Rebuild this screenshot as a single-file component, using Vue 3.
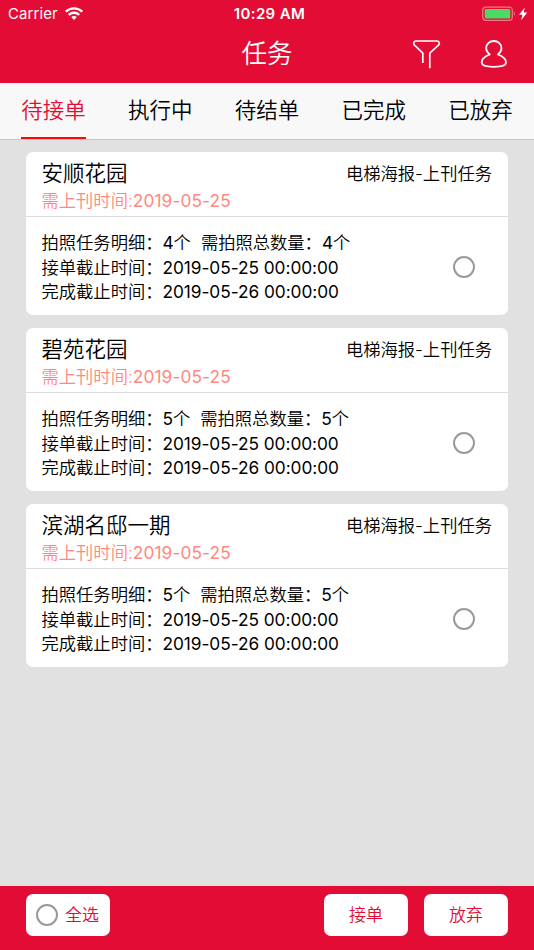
<script setup>
import { ref } from 'vue'

const tabs = ['待接单', '执行中', '待结单', '已完成', '已放弃']
const active = ref(0)
const checked = ref([])

const tasks = [
	{ id: 1, name: '安顺花园', count: 4 },
	{ id: 2, name: '碧苑花园', count: 5 },
	{ id: 3, name: '滨湖名邸一期', count: 5 }
]

const toggle = (id) => {
	checked.value = checked.value.includes(id)
		? checked.value.filter((item) => item !== id)
		: [...checked.value, id]
}

const toggleAll = () => {
	checked.value = checked.value.length === tasks.length ? [] : tasks.map((task) => task.id)
}
</script>

<template>
	<div class="page">
		<header class="header">
			<div class="status-bar">
				<div class="carrier">
					<span class="carrier-name">Carrier</span>
					<svg class="wifi" width="18" height="13" viewBox="0 0 18 13" fill="none" stroke="#fff" stroke-width="2.4">
						<path d="M0.8 4.7C5.4 0.2 12.6 0.2 17.2 4.7" />
						<path d="M3.8 7.8C6.8 5 11.2 5 14.2 7.8" />
						<path d="M6.2 10.1C7.8 8.6 10.2 8.6 11.8 10.1L9 13Z" fill="#fff" stroke="none" />
					</svg>
				</div>
				<span class="clock">10:29 AM</span>
				<svg class="battery" width="46" height="16" viewBox="0 0 46 16">
					<rect x="0.7" y="1.2" width="29.6" height="13.2" rx="3.4" fill="none" stroke="#f0788f" stroke-width="1.2" />
					<rect x="2.7" y="3.1" width="25.6" height="9.4" rx="1.5" fill="#4cd964" />
					<path d="M31.9 5.6Q34 7.8 31.9 10Z" fill="#f0788f" />
					<path d="M42.8 1.4L37 8.8H40.4L39.2 14.2L45.2 6.6H41.6Z" fill="#fff" />
				</svg>
			</div>
			<div class="nav-bar">
				<h1>任务</h1>
				<div class="nav-icons">
					<svg width="28" height="30" viewBox="0 0 28 30" fill="none" stroke="#fff" stroke-width="1.7" stroke-linecap="round" stroke-linejoin="round">
						<path d="M9.8 23.2V14.2L1.5 6.2C0 4.6 0.7 2 3 2H24C26.3 2 27 4.6 25.5 6.2L16.8 14.2V28.4" />
					</svg>
					<svg width="28" height="30" viewBox="0 0 28 30" fill="none" stroke="#fff" stroke-width="1.8" stroke-linejoin="round">
						<path d="M9.7 15.5C7.5 13.7 6.1 11.7 6.1 9.3C6.1 5 9.4 2 13.8 2S21.5 5 21.5 9.3C21.5 11.7 20.2 13.7 18 15.5C22.6 17.3 26 20 26 23.5C26 26.5 21 27.8 13.8 27.8S1.7 26.5 1.7 23.5C1.7 20 5.1 17.3 9.7 15.5Z" />
					</svg>
				</div>
			</div>
		</header>

		<nav class="tabs">
			<button v-for="(tab, index) in tabs" :key="tab" type="button" :class="{ active: active === index }" @click="active = index">
				<span>{{ tab }}</span>
			</button>
		</nav>

		<main class="list">
			<article v-for="task in tasks" :key="task.id" class="card">
				<div class="card-head">
					<div>
						<h2>{{ task.name }}</h2>
						<p class="due">需上刊时间:<span class="due-date">2019-05-25</span></p>
					</div>
					<span class="type">电梯海报-上刊任务</span>
				</div>
				<div class="card-body" @click="toggle(task.id)">
					<div class="details">
						<p class="counts">
							<span>拍照任务明细：<b>{{ task.count }}</b>个</span>
							<span>需拍照总数量：<b>{{ task.count }}</b>个</span>
						</p>
						<p>接单截止时间：<b>2019-05-25 00:00:00</b></p>
						<p>完成截止时间：<b>2019-05-26 00:00:00</b></p>
					</div>
					<i class="radio" :class="{ on: checked.includes(task.id) }"></i>
				</div>
			</article>
		</main>

		<footer class="footer">
			<button type="button" class="all" @click="toggleAll">
				<i class="radio" :class="{ on: checked.length === tasks.length }"></i>
				<span>全选</span>
			</button>
			<div class="actions">
				<button type="button"><span>接单</span></button>
				<button type="button"><span>放弃</span></button>
			</div>
		</footer>
	</div>
</template>

<style>
body {
	margin: 0;
}
</style>

<style scoped>
.page {
	display: flex;
	flex-direction: column;
	height: 100vh;
	background: #e1e1e1;
	color: #000;
	font-family: Inter, 'Noto Sans CJK SC', sans-serif;
	font-size: 17.3px;
	font-weight: 350;
}

h1,
h2,
p {
	margin: 0;
	font-weight: inherit;
}

button {
	padding: 0;
	border: none;
	background: none;
	font: inherit;
	color: inherit;
	cursor: pointer;
}

svg {
	display: block;
}

.header {
	height: 83px;
	background: #e30c34;
	color: #fff;
}

.status-bar {
	display: grid;
	grid-template-columns: 1fr auto 1fr;
	align-items: center;
	height: 27px;
	padding: 0 6px 0 8px;
	font-size: 15px;
}

.carrier {
	display: flex;
	align-items: center;
	gap: 7px;
}

.carrier-name {
	font-weight: 400;
	letter-spacing: 0.1px;
}

.clock {
	padding-left: 3px;
	font-weight: 600;
	letter-spacing: 0.35px;
}

.battery {
	justify-self: end;
}

.nav-bar {
	display: grid;
	grid-template-columns: 1fr auto 1fr;
	align-items: center;
	height: 54px;
}

.nav-bar h1 {
	grid-column: 2;
	font-size: 25.6px;
	line-height: 52px;
}

.nav-icons {
	display: flex;
	justify-content: flex-end;
	gap: 39px;
	padding-right: 26px;
}

.tabs {
	display: flex;
	flex: none;
	height: 56px;
	border-bottom: 1px solid #c8c8c8;
	background: #f8f8f8;
	font-size: 21.5px;
}

.tabs button {
	display: flex;
	flex: 1;
	justify-content: center;
}

.tabs span {
	box-sizing: border-box;
	height: 56px;
	border-bottom: 2px solid transparent;
	line-height: 54px;
}

.tabs .active span {
	border-color: #ff0505;
	color: #e30c34;
}

.list {
	display: flex;
	flex: 1;
	flex-direction: column;
	gap: 13px;
	padding: 12.4px 26px;
}

.card {
	height: 163px;
	border-radius: 7px;
	background: #fff;
}

.card-head {
	display: flex;
	justify-content: space-between;
	box-sizing: border-box;
	height: 65px;
	padding: 7px 16px 0 15.5px;
	border-bottom: 1px solid #dcdcdc;
}

.card h2 {
	font-size: 21.5px;
	line-height: 29px;
}

.due {
	line-height: 25px;
	color: #ff8880;
}

.due-date {
	font-weight: 400;
	letter-spacing: 0.1px;
}

.type {
	line-height: 29px;
}

.card-body {
	display: flex;
	align-items: center;
	justify-content: space-between;
	height: 98px;
	padding: 0 33px 0 15.5px;
}

.details {
	padding-top: 3px;
	line-height: 24.5px;
	white-space: nowrap;
}

.details b {
	font-weight: 400;
	letter-spacing: -0.05px;
}

.counts {
	display: flex;
	gap: 10px;
}

.radio {
	box-sizing: border-box;
	width: 22px;
	height: 22px;
	border: 2px solid #999;
	border-radius: 50%;
}

.card-body .radio {
	margin-top: 1px;
}

.radio.on {
	background: #e30c34;
	box-shadow: inset 0 0 0 3px #fff;
}

.footer {
	display: flex;
	flex: none;
	align-items: flex-start;
	justify-content: space-between;
	box-sizing: border-box;
	height: 64px;
	padding: 8px 26px 0;
	background: #e30c34;
}

.footer button {
	width: 84px;
	height: 42px;
	border-radius: 7px;
	background: #fff;
	color: #e30c34;
	font-size: 17px;
}

.footer button span {
	display: block;
	padding-bottom: 3px;
}

.footer .all {
	display: flex;
	align-items: center;
	gap: 7px;
	padding-left: 10px;
}

.actions {
	display: flex;
	gap: 16px;
}
</style>
